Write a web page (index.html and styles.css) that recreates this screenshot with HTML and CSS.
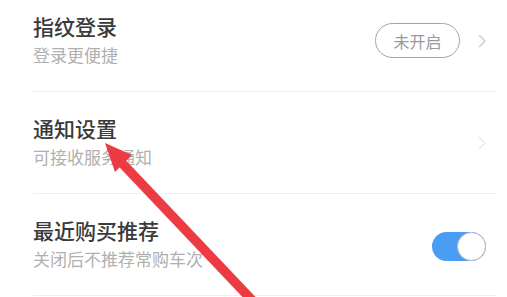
FILE: index.html
```html
<!DOCTYPE html>
<html lang="zh-CN">
<head>
<meta charset="utf-8">
<link rel="stylesheet" href="styles.css">
</head>
<body>
<div class="page">
  <ul class="list">
    <li class="row">
      <div class="text">
        <div class="title">指纹登录</div>
        <div class="sub">登录更便捷</div>
      </div>
      <div class="ctrl">
        <span class="pill">未开启</span>
        <svg class="chev" width="8" height="14" viewBox="0 0 8 14"><polyline points="1,1 7,7 1,13" fill="none" stroke="#cfcfcf" stroke-width="1.5"/></svg>
      </div>
    </li>
    <li class="row">
      <div class="text">
        <div class="title">通知设置</div>
        <div class="sub">可接收服务通知</div>
      </div>
      <div class="ctrl">
        <svg class="chev" width="8" height="14" viewBox="0 0 8 14"><polyline points="1,1 7,7 1,13" fill="none" stroke="#ececec" stroke-width="1.5"/></svg>
      </div>
    </li>
    <li class="row">
      <div class="text">
        <div class="title">最近购买推荐</div>
        <div class="sub">关闭后不推荐常购车次</div>
      </div>
      <div class="ctrl">
        <span class="toggle"><span class="knob"></span></span>
      </div>
    </li>
  </ul>
  <svg class="arrow" width="507" height="297" viewBox="0 0 507 297">
    <line x1="120" y1="161" x2="268" y2="317" stroke="#ec3b43" stroke-width="9.5"/>
    <polygon points="105,143 132,155 115,172" fill="#ec3b43"/>
  </svg>
</div>
</body>
</html>
```
FILE: styles.css
```css
html, body {
  margin: 0;
  padding: 0;
  background: #ffffff;
}
body {
  font-family: "Noto Sans CJK SC", "Noto Sans", sans-serif;
  width: 507px;
  height: 297px;
  overflow: hidden;
}
.page {
  position: relative;
  width: 507px;
  height: 297px;
  overflow: hidden;
}
.list {
  list-style: none;
  margin: -10px 11px 0 33px;
  padding: 0;
}
.row {
  height: 101px;
  border-bottom: 1px solid #efefef;
  display: flex;
  align-items: center;
  justify-content: space-between;
  padding-right: 10px;
}
.text {
  display: flex;
  flex-direction: column;
  gap: 5px;
  margin-top: -2px;
}
.title {
  font-size: 21px;
  line-height: 26px;
  font-weight: 500;
  color: #3a3a3a;
}
.sub {
  font-size: 17px;
  line-height: 22px;
  color: #b0b0b0;
}
.ctrl {
  display: flex;
  align-items: center;
  gap: 18px;
}
.pill {
  box-sizing: border-box;
  width: 85px;
  height: 35px;
  border: 1.5px solid #a5a5a5;
  border-radius: 18px;
  display: flex;
  align-items: center;
  justify-content: center;
  font-size: 16px;
  color: #9a9a9a;
}
.chev {
  display: block;
}
.toggle {
  box-sizing: border-box;
  width: 54px;
  height: 29px;
  border-radius: 15px;
  background: #4a9df2;
  display: flex;
  justify-content: flex-end;
  align-items: center;
  margin-top: 3px;
}
.knob {
  box-sizing: border-box;
  width: 29px;
  height: 29px;
  border-radius: 50%;
  background: #ffffff;
  border: 1px solid #b8bfc8;
}
.arrow {
  position: absolute;
  left: 0;
  top: 0;
}
```
